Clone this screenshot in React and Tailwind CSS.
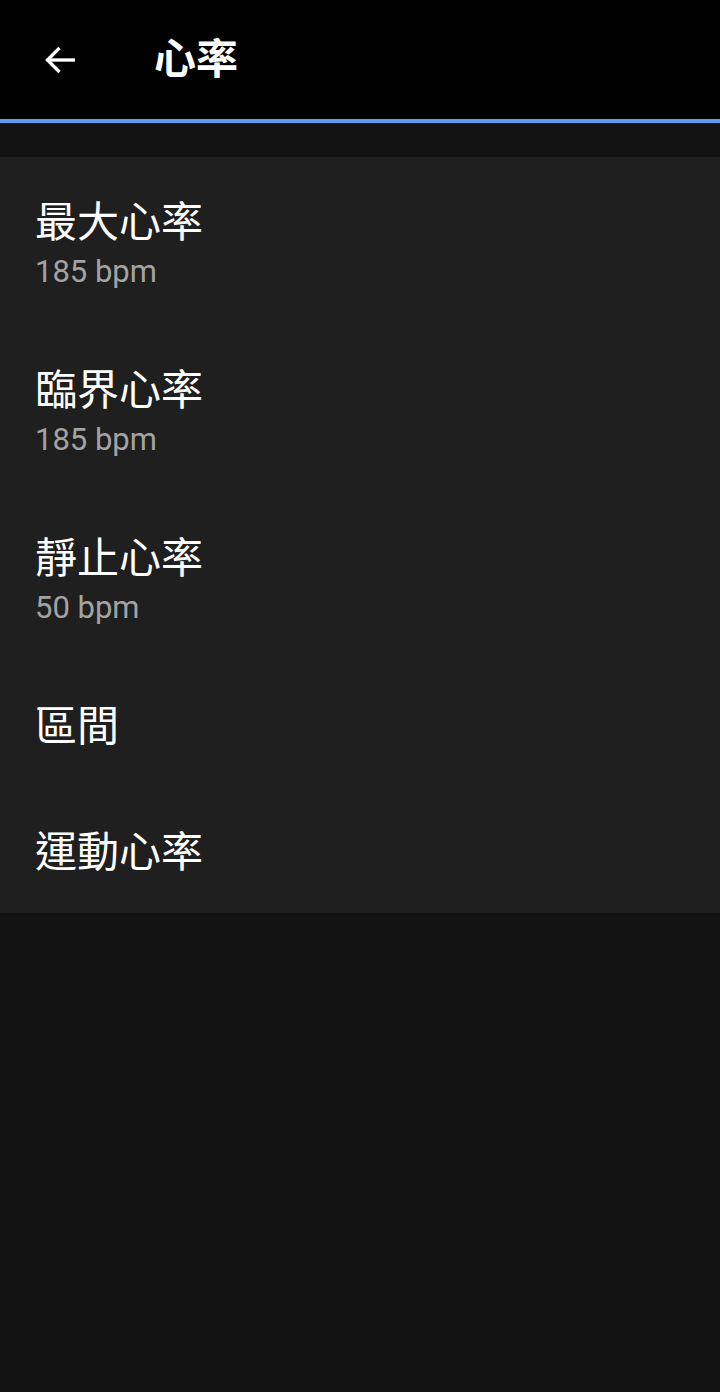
import React from 'react';

const items = [
  { title: '最大心率', sub: '185 bpm' },
  { title: '臨界心率', sub: '185 bpm' },
  { title: '靜止心率', sub: '50 bpm' },
  { title: '區間' },
  { title: '運動心率' },
];

const font = { fontFamily: 'Roboto, "Noto Sans CJK TC", sans-serif' };

export default function App() {
  return (
    <div className="min-h-[1392px] w-[720px] bg-[#121212] text-white" style={font}>
      {/* App bar */}
      <div className="flex h-[119px] items-center bg-black">
        <button className="ml-[38px] flex h-[44px] w-[44px] items-center justify-center text-white">
          <svg width="40" height="40" viewBox="0 0 24 24" fill="none" stroke="currentColor" strokeWidth="2" strokeLinecap="square">
            <path d="M20 12H5" />
            <path d="M11 5.5 4.5 12l6.5 6.5" />
          </svg>
        </button>
        <h1 className="ml-[72px] text-[42px] font-bold leading-none">心率</h1>
      </div>
      <div className="h-[4px] bg-[#5b9bf0]" />

      {/* List */}
      <div className="mt-[34px] bg-[#1f1f1f]">
        {items.map((item) => (
          <div
            key={item.title}
            className={`flex flex-col px-[35px] pt-[41px] ${item.sub ? 'h-[168px]' : 'h-[126px]'}`}
          >
            <div className="h-[50px] text-[42px] leading-[50px] text-white">{item.title}</div>
            {item.sub && (
              <div className="h-[48px] text-[31px] leading-[48px] text-[#a3a3a3]">{item.sub}</div>
            )}
          </div>
        ))}
      </div>
    </div>
  );
}
